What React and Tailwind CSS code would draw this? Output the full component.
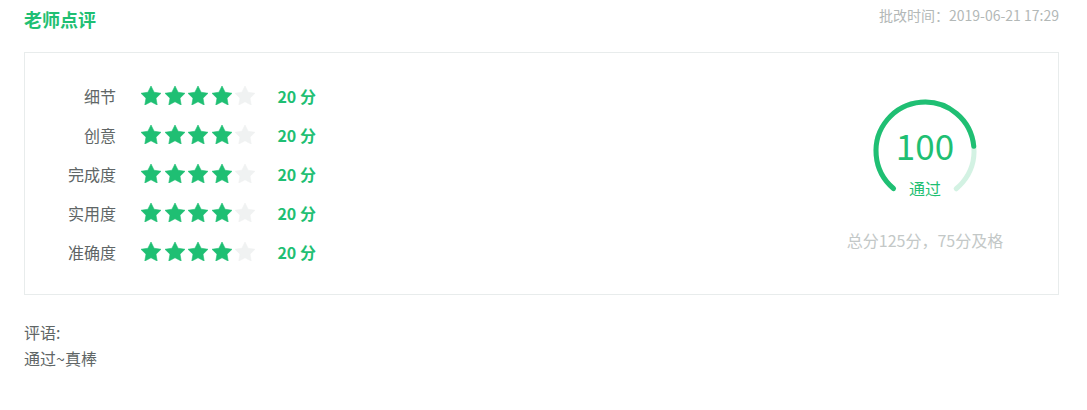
import React from "react";

const font = { fontFamily: '"Noto Sans CJK SC", "Noto Sans", sans-serif' };

function Star({ on }) {
  return (
    <svg width="20" height="19" viewBox="2 2 20 19" className="shrink-0">
      <path
        d="M12 2l3.09 6.26L22 9.27l-5 4.87 1.18 6.88L12 17.77l-6.18 3.25L7 14.14 2 9.27l6.91-1.01L12 2z"
        fill={on ? "#1fbf73" : "#f0f2f2"}
        stroke={on ? "#1fbf73" : "#f0f2f2"}
        strokeWidth="0.6"
        strokeLinejoin="round"
      />
    </svg>
  );
}

const rows = ["细节", "创意", "完成度", "实用度", "准确度"];

function Gauge() {
  const r = 49;
  const C = 2 * Math.PI * r;
  const track = (280 / 360) * C;
  const done = (224 / 360) * C;
  return (
    <div className="relative w-[110px] h-[110px]">
      <svg width="110" height="110" viewBox="0 0 110 110" className="absolute inset-0">
        <g transform="rotate(130 55 55)">
          <circle cx="55" cy="55" r={r} fill="none" stroke="#d3f2e3" strokeWidth="5" strokeLinecap="round" strokeDasharray={`${track} ${C}`} />
          <circle cx="55" cy="55" r={r} fill="none" stroke="#1fbf73" strokeWidth="5" strokeLinecap="round" strokeDasharray={`${done} ${C}`} />
        </g>
      </svg>
      <div className="absolute inset-0 flex flex-col items-center">
        <div className="mt-[27px] h-[44px] leading-[44px] text-[35px] text-[#1fbf73]" style={font}>100</div>
        <div className="mt-[11px] text-[16px] leading-[20px] text-[#1fbf73]" style={font}>通过</div>
      </div>
    </div>
  );
}

export default function App() {
  return (
    <div className="w-[1087px] h-[410px] bg-white" style={font}>
      <div className="ml-6 w-[1035px]">
        <div className="flex items-center justify-between h-[38px]">
          <div className="text-[18px] font-bold text-[#1fbf73] leading-[24px]">老师点评</div>
          <div className="text-[14px] text-[#b3b8b7] self-start mt-[5px] leading-[20px]">批改时间：2019-06-21 17:29</div>
        </div>
        <div className="mt-[14px] h-[243px] border border-[#e8ecec] flex">
          <div className="flex-1 pt-[23px] flex flex-col">
            {rows.map((l) => (
              <div key={l} className="flex items-center h-[39px]">
                <div className="w-[91px] text-right text-[16px] text-[#606666]">{l}</div>
                <div className="ml-[25px] flex gap-[3.6px]">
                  {[0, 1, 2, 3, 4].map((i) => (
                    <Star key={i} on={i < 4} />
                  ))}
                </div>
                <div className="ml-[22px] text-[16px] font-bold text-[#1fbf73]">20 分</div>
              </div>
            ))}
          </div>
          <div className="w-[266px] flex flex-col items-center pt-[43px]">
            <Gauge />
            <div className="mt-[24px] text-[16px] text-[#c3c8c7] leading-[20px]">总分125分，75分及格</div>
          </div>
        </div>
        <div className="mt-[24px] text-[16px] text-[#606666] leading-[26px]">
          <div>评语:</div>
          <div>通过~真棒</div>
        </div>
      </div>
    </div>
  );
}
